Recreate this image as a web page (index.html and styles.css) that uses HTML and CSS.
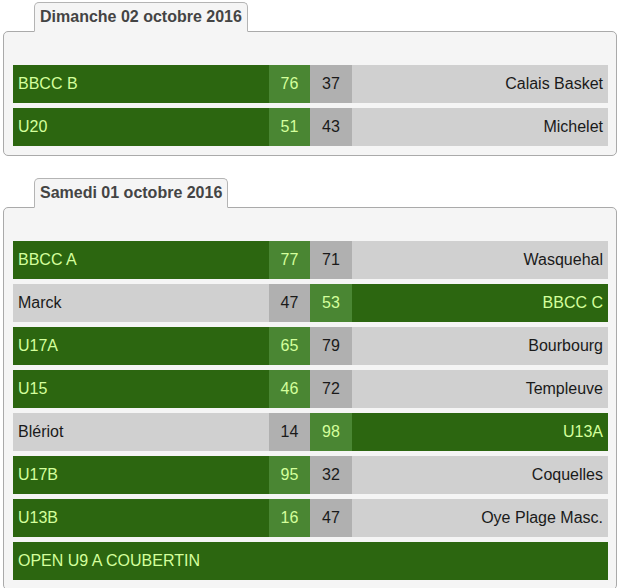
FILE: index.html
```html
<!DOCTYPE html>
<html lang="fr">
<head>
<meta charset="utf-8">
<title>Résultats</title>
<link rel="stylesheet" href="styles.css">
</head>
<body>
<div class="page">
  <section class="day">
    <div class="tab">Dimanche 02 octobre 2016</div>
    <div class="panel">
      <div class="match home">
        <div class="team left">BBCC B</div>
        <div class="score">76</div>
        <div class="score">37</div>
        <div class="team right">Calais Basket</div>
      </div>
      <div class="match home">
        <div class="team left">U20</div>
        <div class="score">51</div>
        <div class="score">43</div>
        <div class="team right">Michelet</div>
      </div>
    </div>
  </section>

  <section class="day">
    <div class="tab">Samedi 01 octobre 2016</div>
    <div class="panel">
      <div class="match home">
        <div class="team left">BBCC A</div>
        <div class="score">77</div>
        <div class="score">71</div>
        <div class="team right">Wasquehal</div>
      </div>
      <div class="match away">
        <div class="team left">Marck</div>
        <div class="score">47</div>
        <div class="score">53</div>
        <div class="team right">BBCC C</div>
      </div>
      <div class="match home">
        <div class="team left">U17A</div>
        <div class="score">65</div>
        <div class="score">79</div>
        <div class="team right">Bourbourg</div>
      </div>
      <div class="match home">
        <div class="team left">U15</div>
        <div class="score">46</div>
        <div class="score">72</div>
        <div class="team right">Templeuve</div>
      </div>
      <div class="match away">
        <div class="team left">Blériot</div>
        <div class="score">14</div>
        <div class="score">98</div>
        <div class="team right">U13A</div>
      </div>
      <div class="match home">
        <div class="team left">U17B</div>
        <div class="score">95</div>
        <div class="score">32</div>
        <div class="team right">Coquelles</div>
      </div>
      <div class="match home">
        <div class="team left">U13B</div>
        <div class="score">16</div>
        <div class="score">47</div>
        <div class="team right">Oye Plage Masc.</div>
      </div>
      <div class="event">OPEN U9 A COUBERTIN</div>
    </div>
  </section>
</div>
</body>
</html>
```

FILE: styles.css
```css
html, body {
  margin: 0;
  padding: 0;
  background: #ffffff;
}

body {
  font-family: "Liberation Sans", Arial, sans-serif;
  font-size: 16px;
}

.page {
  padding: 2px 0 0 3px;
  width: 614px;
}

.day {
  display: flex;
  flex-direction: column;
  align-items: flex-start;
  margin-bottom: 22px;
}

.tab {
  position: relative;
  z-index: 1;
  margin-left: 31px;
  margin-bottom: -1px;
  height: 30px;
  line-height: 28px;
  padding: 0 5px;
  box-sizing: border-box;
  background: #f5f5f5;
  border: 1px solid #b4b4b4;
  border-bottom: 1px solid #f5f5f5;
  border-radius: 5px 5px 0 0;
  font-weight: bold;
  color: #444444;
}

.panel {
  align-self: stretch;
  box-sizing: border-box;
  background: #f5f5f5;
  border: 1px solid #aaaaaa;
  border-radius: 5px;
  padding: 33px 8px 9px 9px;
  display: flex;
  flex-direction: column;
  gap: 5px;
}

.match {
  display: grid;
  grid-template-columns: 1fr 41px 42px 1fr;
  height: 38px;
}

.team, .score, .event {
  display: flex;
  align-items: center;
  height: 38px;
}

.team {
  padding: 0 5px;
}

.team.right {
  justify-content: flex-end;
}

.score {
  justify-content: center;
}

.event {
  padding: 0 5px;
  background: #2c6610;
  color: #d4ff9c;
}

.home .team.left,
.away .team.right {
  background: #2c6610;
  color: #d4ff9c;
}

.home .score:nth-child(2),
.away .score:nth-child(3) {
  background: #4a8633;
  color: #d4ff9c;
}

.home .score:nth-child(3),
.away .score:nth-child(2) {
  background: #b0b0b0;
  color: #1a1a1a;
}

.home .team.right,
.away .team.left {
  background: #d0d0d0;
  color: #1a1a1a;
}
```
